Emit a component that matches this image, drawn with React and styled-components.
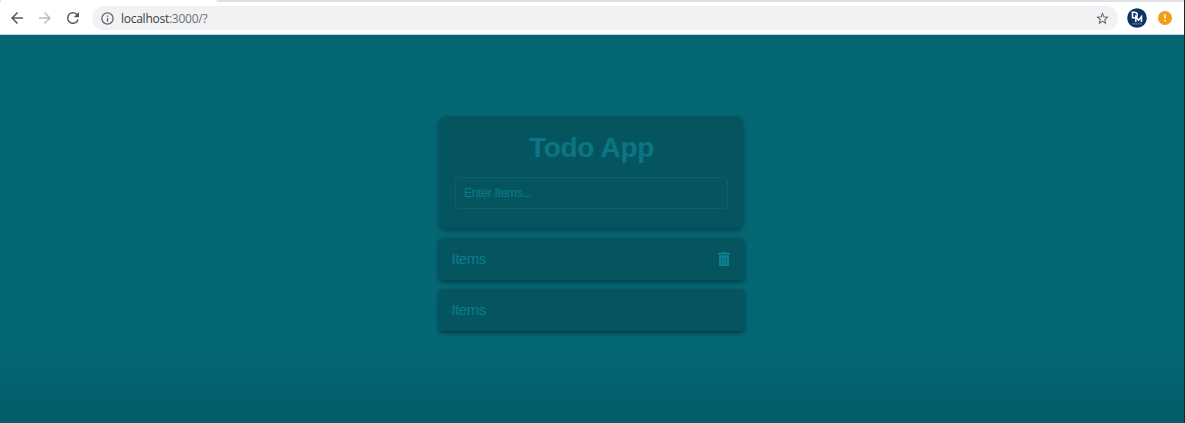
import React from 'react';
import styled, { createGlobalStyle } from 'styled-components';

const GlobalStyle = createGlobalStyle`
  * { box-sizing: border-box; }
  body { margin: 0; overflow: hidden; font-family: "Liberation Sans", Arial, sans-serif; }
`;

const Window = styled.div`
  display: flex;
  flex-direction: column;
  height: 423px;
  border-right: 1px solid #17272b;
  background: #fff;
`;

const TabStrip = styled.div`
  flex: none;
  height: 2px;
  background: #dee1e6;
`;

const ActiveTab = styled.div`
  width: 216px;
  height: 2px;
  margin-left: 1px;
  background: #fff;
  border-bottom-right-radius: 2px;
`;

const Toolbar = styled.header`
  flex: none;
  display: flex;
  align-items: center;
  height: 33px;
  padding: 0 12px 0 8px;
  border-bottom: 1px solid #c3d5d8;
`;

const NavButton = styled.button`
  display: flex;
  padding: 0;
  margin-right: 10px;
  border: 0;
  background: none;
  color: ${(p) => (p.$muted ? '#bcbec0' : '#55585c')};
`;

const AddressBar = styled.div`
  flex: 1;
  display: flex;
  align-items: center;
  height: 24px;
  margin-right: 9px;
  padding: 0 8px;
  border-radius: 12px;
  background: #f0f2f3;
  color: #5f6368;
`;

const Url = styled.span`
  flex: 1;
  margin: 2px 0 0 6px;
  font: 12px/16px "Open Sans", "Noto Sans", sans-serif;
  letter-spacing: -0.26px;
  color: #6c7074;
`;

const Host = styled.span`
  color: #3b3e42;
`;

const Alert = styled.span`
  display: flex;
  margin-left: 11px;
`;

const Page = styled.main`
  flex: 1;
  display: flex;
  flex-direction: column;
  align-items: center;
  padding: 81px 2px 0 0;
  background: linear-gradient(#056674 0, #056674 318px, #035c69 388px);
`;

const Card = styled.section`
  width: 304px;
  height: 112px;
  padding: 15px 16px;
  border-radius: 8px;
  background: #055560;
  box-shadow: 0 3px 5px rgba(0, 50, 58, 0.6);
`;

const Title = styled.h1`
  margin: 0 0 13px;
  padding-left: 1px;
  font-size: 28px;
  line-height: 33px;
  letter-spacing: -0.3px;
  text-align: center;
  color: #0b7585;
`;

const ItemInput = styled.input`
  display: block;
  width: 273px;
  height: 32px;
  padding: 0 8px;
  border: 1px solid #08616d;
  border-radius: 4px;
  outline: none;
  background: transparent;
  font: 12px "Liberation Sans", Arial, sans-serif;
  letter-spacing: -0.25px;
  color: #0b7c8c;
  &::placeholder { color: #0b7c8c; opacity: 1; }
`;

const List = styled.ul`
  display: flex;
  flex-direction: column;
  gap: 9px;
  width: 305px;
  margin: 10px 0 0;
  padding: 0;
  list-style: none;
`;

const Item = styled.li`
  display: flex;
  align-items: center;
  justify-content: space-between;
  height: 42px;
  padding: 0 14px 0 13px;
  border-radius: 4px;
  background: #055560;
  box-shadow: 0 2px 4px rgba(0, 40, 48, 0.75);
  font-size: 15px;
  letter-spacing: -0.5px;
  color: #0b7c8c;
`;

const ItemLabel = styled.span`
  padding-bottom: 2px;
`;

const Icon = ({ size = 18, path }) => (
  <svg width={size} height={size} viewBox="0 0 24 24" fill="currentColor">
    <path d={path} />
  </svg>
);

const BACK = 'M20 11H7.83l5.59-5.59L12 4l-8 8 8 8 1.41-1.41L7.83 13H20v-2z';
const FORWARD = 'M12 4l-1.41 1.41L16.17 11H4v2h12.17l-5.58 5.59L12 20l8-8z';
const RELOAD =
  'M17.65 6.35A7.96 7.96 0 0 0 12 4a8 8 0 1 0 7.73 10h-2.08A6 6 0 1 1 12 6c1.66 0 3.14.69 4.22 1.78L13 11h7V4l-2.35 2.35z';
const INFO =
  'M11 7h2v2h-2zm0 4h2v6h-2zm1-9a10 10 0 1 0 0 20 10 10 0 0 0 0-20zm0 18a8 8 0 1 1 0-16 8 8 0 0 1 0 16z';
const STAR =
  'M22 9.24l-7.19-.62L12 2 9.19 8.63 2 9.24l5.46 4.73L5.82 21 12 17.27 18.18 21l-1.63-7.03L22 9.24zM12 15.4l-3.76 2.27 1-4.28-3.32-2.88 4.38-.38L12 6.1l1.71 4.04 4.38.38-3.32 2.88 1 4.28L12 15.4z';

const Avatar = () => (
  <svg width="20" height="20" viewBox="0 0 20 20">
    <circle cx="10" cy="10" r="9.8" fill="#0b3365" />
    <g fill="none" stroke="#fff" strokeWidth="1.5">
      <path d="M5.5 4.2v5.6h1.8c4 0 4-5.6 0-5.6H4.5" />
      <path d="M8.8 14V8.7l2.8 3.6 2.9-3.6V14" />
    </g>
    <path d="M5 15.9h10" stroke="#8ca0bb" strokeWidth="0.7" />
  </svg>
);

const AlertIcon = () => (
  <svg width="14" height="14" viewBox="0 0 14 14">
    <circle cx="7" cy="7" r="7" fill="#f29d18" />
    <path d="M7 3.2v4.4M7 9v1.6" stroke="#fff" strokeWidth="1.5" />
  </svg>
);

const TrashIcon = () => (
  <svg width="12" height="14" viewBox="0 0 12 14">
    <path d="M0 1h3.5V0h5v1H12v1.5H0z" fill="#0b8291" />
    <path d="M1 3.3h10V13a1 1 0 0 1-1 1H2a1 1 0 0 1-1-1z" fill="#0b8291" />
    <path d="M3.5 5v7M6 5v7M8.5 5v7" stroke="#066471" strokeWidth="0.8" />
  </svg>
);

export default function App() {
  return (
    <>
      <GlobalStyle />
      <Window>
        <TabStrip><ActiveTab /></TabStrip>
        <Toolbar>
          <NavButton aria-label="Back"><Icon path={BACK} /></NavButton>
          <NavButton aria-label="Forward" $muted><Icon path={FORWARD} /></NavButton>
          <NavButton aria-label="Reload"><Icon path={RELOAD} /></NavButton>
          <AddressBar>
            <Icon size={15} path={INFO} />
            <Url><Host>localhost</Host>:3000/?</Url>
            <Icon size={15} path={STAR} />
          </AddressBar>
          <Avatar />
          <Alert><AlertIcon /></Alert>
        </Toolbar>
        <Page>
          <Card>
            <Title>Todo App</Title>
            <ItemInput placeholder="Enter Items..." />
          </Card>
          <List>
            <Item><ItemLabel>Items</ItemLabel><TrashIcon /></Item>
            <Item><ItemLabel>Items</ItemLabel></Item>
          </List>
        </Page>
      </Window>
    </>
  );
}
